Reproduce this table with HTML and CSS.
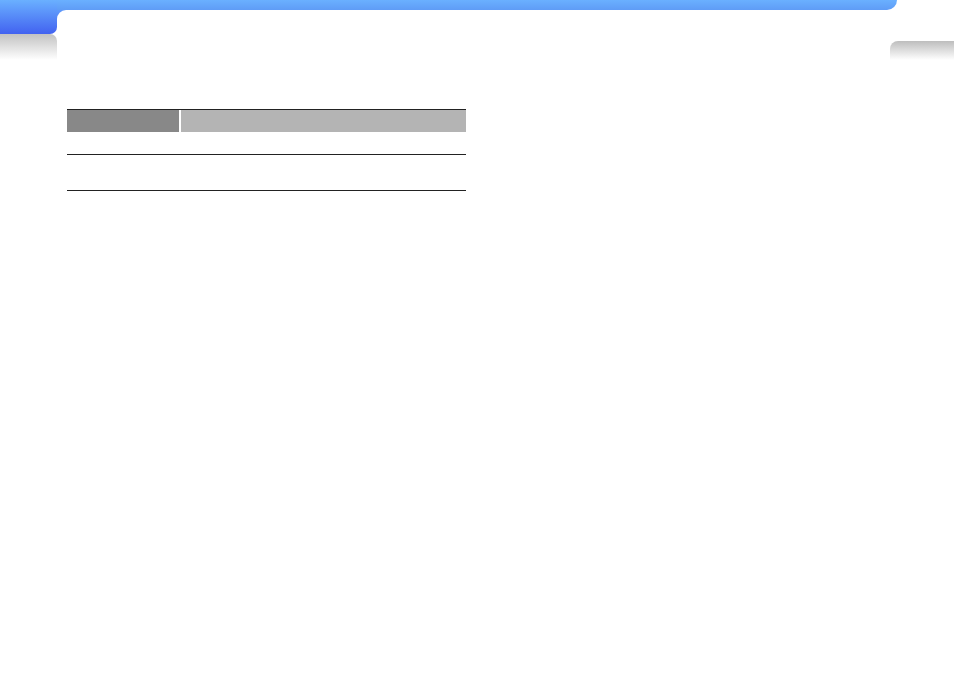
FILE: index.html
```html
<!DOCTYPE html>
<html lang="en">
<head>
    <meta charset="UTF-8">
    <meta name="viewport" content="width=device-width, initial-scale=1.0">
    <title>Spec page</title>
    <link rel="stylesheet" href="styles.css">
</head>
<body>
    <div class="header">
        <div class="corner">
            <div class="corner-blue"></div>
            <div class="corner-grey"></div>
        </div>
        <div class="strip">
            <div class="bar"></div>
            <div class="sheet">
                <div class="tab-grey"></div>
            </div>
        </div>
    </div>

    <div class="spec">
        <div class="spec-head">
            <div class="head-key"></div>
            <div class="head-value"></div>
        </div>
        <div class="spec-row short"></div>
        <div class="spec-row tall"></div>
    </div>
</body>
</html>
```

FILE: styles.css
```css
body {
    font-family: "Liberation Sans", Arial, sans-serif;
    margin: 0;
    padding: 0;
    background-color: #fff;
}
.header {
    display: flex;
    height: 60px;
}
.corner {
    width: 57px;
    display: flex;
    flex-direction: column;
}
.corner-blue {
    height: 34px;
    background: linear-gradient(#6ab0ff, #4262f0);
    border-bottom-right-radius: 7px;
}
.corner-grey {
    height: 26px;
    background: linear-gradient(#c2c2c2, #fff);
    border-top-right-radius: 7px;
}
.strip {
    flex: 1;
    display: flex;
    flex-direction: column;
    background: linear-gradient(#6ab0ff, #4262f0) no-repeat left top / 20px 34px;
}
.bar {
    height: 10px;
    margin-right: 57px;
    background: linear-gradient(#6ab0ff, #5f9cf6);
    border-bottom-right-radius: 12px;
}
.sheet {
    flex: 1;
    display: flex;
    justify-content: flex-end;
    background-color: #fff;
    border-top-left-radius: 9px;
}
.tab-grey {
    width: 64px;
    height: 19px;
    margin-top: 31px;
    background: linear-gradient(#bdbdbd, #fff);
    border-top-left-radius: 8px;
}
.spec {
    width: 399px;
    margin: 49px 0 0 67px;
    border-top: 1px solid #222;
}
.spec-head {
    display: flex;
    gap: 2px;
    height: 22px;
}
.head-key {
    width: 112px;
    background-color: #888;
}
.head-value {
    flex: 1;
    background-color: #b4b4b4;
}
.spec-row {
    border-bottom: 1px solid #222;
}
.short {
    height: 22px;
}
.tall {
    height: 35px;
}
```
